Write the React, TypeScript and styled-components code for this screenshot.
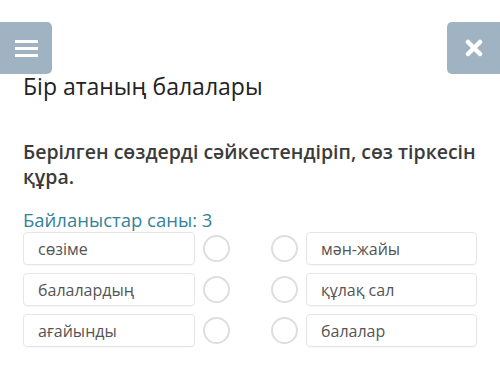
import React from 'react';
import styled, { createGlobalStyle } from 'styled-components';

const GlobalStyle = createGlobalStyle`
  html, body {
    margin: 0;
    padding: 0;
    background: #ffffff;
  }
  body {
    font-family: "Open Sans", "Noto Sans", sans-serif;
  }
`;

const Page = styled.div`
  width: 500px;
  height: 379px;
  overflow: hidden;
  background: #fff;
`;

const TopBar = styled.div`
  display: flex;
  justify-content: space-between;
  padding-top: 22px;
`;

const IconButton = styled.div<{ $side: 'left' | 'right' }>`
  width: ${(p) => (p.$side === 'left' ? '52px' : '53px')};
  height: 52px;
  background: #a0b3c2;
  border-radius: ${(p) => (p.$side === 'left' ? '0 5px 5px 0' : '5px 0 0 5px')};
  display: flex;
  align-items: center;
  justify-content: center;
`;

const Content = styled.div`
  padding: 0 23px;
`;

const Title = styled.h1`
  margin: -2px 0 0;
  font-size: 23px;
  line-height: 28px;
  font-weight: 400;
  color: #222;
`;

const Question = styled.p`
  margin: 39px 0 0;
  font-size: 19.5px;
  line-height: 25px;
  font-weight: 600;
  color: #3b3b3b;
`;

const Count = styled.div`
  margin-top: 19px;
  font-size: 18.5px;
  line-height: 24px;
  color: #33829a;
`;

const Grid = styled.div`
  display: grid;
  grid-template-columns: 172px 27px 1fr 27px 171px;
  column-gap: 8px;
  row-gap: 8px;
  align-items: center;
  margin-top: 0;
`;

const Card = styled.div`
  height: 33px;
  box-sizing: border-box;
  border: 1px solid #e6e6e6;
  border-radius: 4px;
  padding: 0 14px;
  display: flex;
  align-items: center;
  font-size: 16px;
  color: #555;
  box-shadow: 0 1px 1px rgba(0, 0, 0, 0.03);
`;

const Dot = styled.div`
  width: 27px;
  height: 27px;
  box-sizing: border-box;
  border: 2px solid #dedede;
  border-radius: 50%;
`;

const Spacer = styled.div``;

const MenuIcon = () => (
  <svg width="23" height="17" viewBox="0 0 23 17">
    <rect x="0" y="0" width="23" height="3" fill="#fff" />
    <rect x="0" y="7" width="23" height="3" fill="#fff" />
    <rect x="0" y="14" width="23" height="3" fill="#fff" />
  </svg>
);

const CloseIcon = () => (
  <svg width="18" height="18" viewBox="0 0 18 18">
    <path d="M3 3 L15 15 M15 3 L3 15" stroke="#fff" strokeWidth="4.5" strokeLinecap="round" />
  </svg>
);

const left = ['сөзіме', 'балалардың', 'ағайынды'];
const right = ['мән-жайы', 'құлақ сал', 'балалар'];

export default function App() {
  return (
    <Page>
      <GlobalStyle />
      <TopBar>
        <IconButton $side="left">
          <MenuIcon />
        </IconButton>
        <IconButton $side="right">
          <CloseIcon />
        </IconButton>
      </TopBar>
      <Content>
        <Title>Бір атаның балалары</Title>
        <Question>Берілген сөздерді сәйкестендіріп, сөз тіркесін құра.</Question>
        <Count>Байланыстар саны: 3</Count>
        <Grid>
          {left.map((w, i) => (
            <React.Fragment key={w}>
              <Card>{w}</Card>
              <Dot />
              <Spacer />
              <Dot />
              <Card>{right[i]}</Card>
            </React.Fragment>
          ))}
        </Grid>
      </Content>
    </Page>
  );
}
